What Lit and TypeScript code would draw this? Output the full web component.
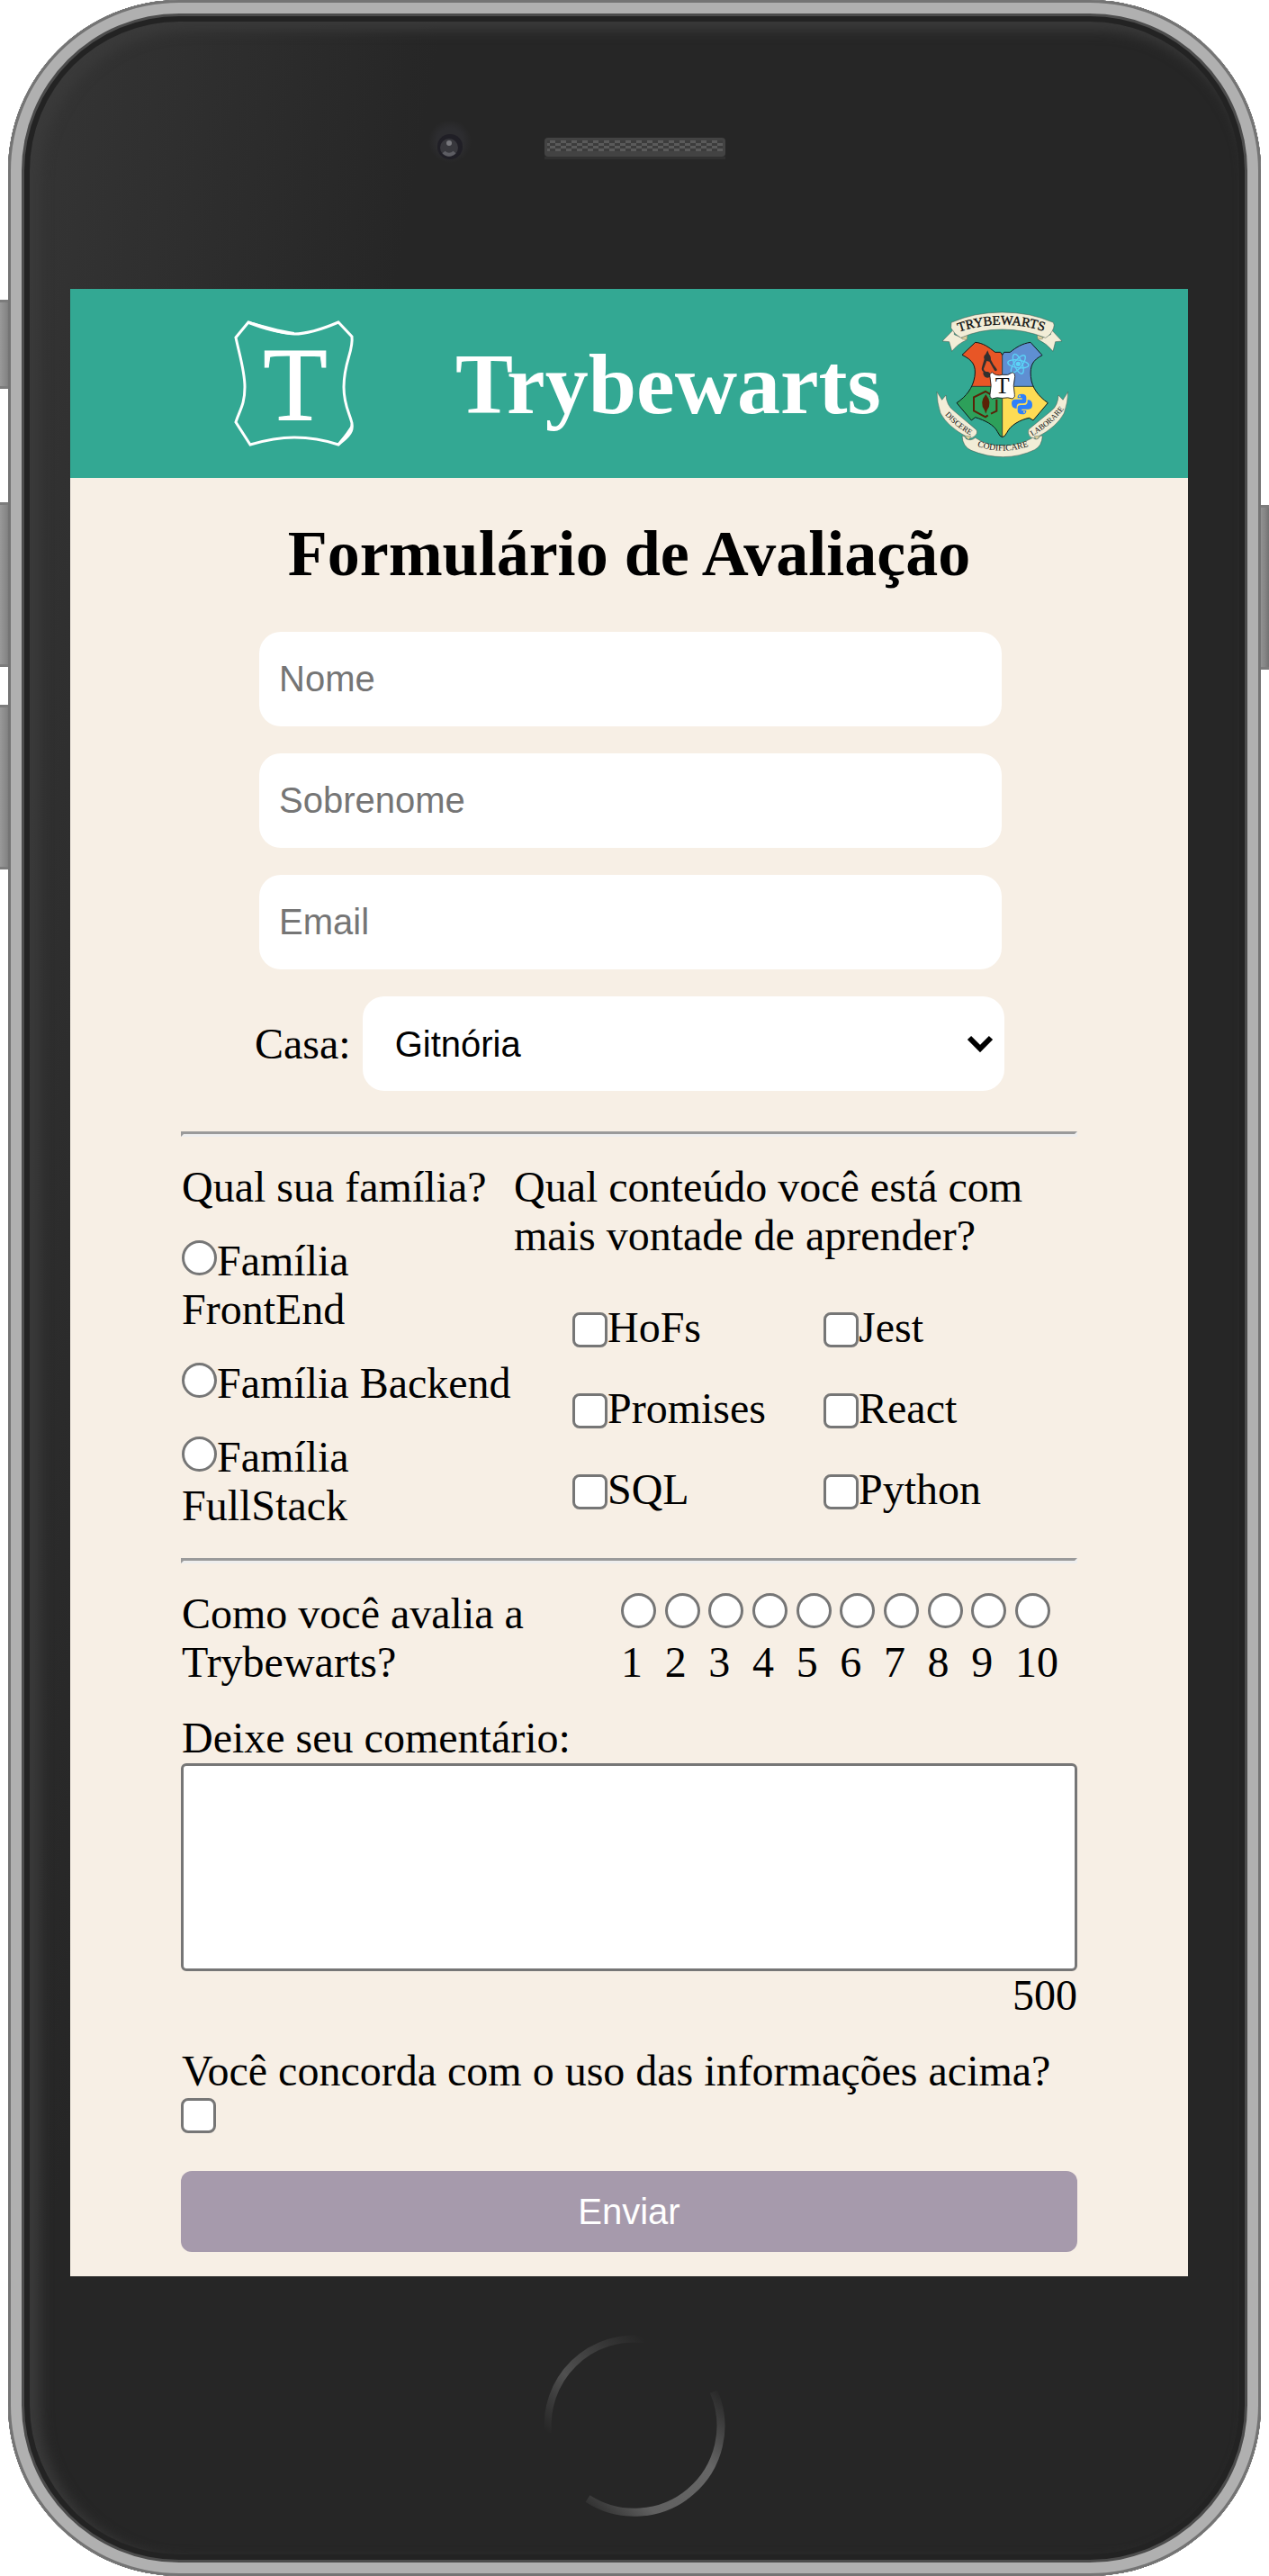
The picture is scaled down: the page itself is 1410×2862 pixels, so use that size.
import { LitElement, html, css, svg } from "lit";
import { customElement, property, state } from "lit/decorators.js";

@customElement("shield-logo")
export class ShieldLogo extends LitElement {
  static styles = css`
    :host { display: block; width: 134px; height: 142px; }
    svg { display: block; width: 100%; height: 100%; }
    .t { font: 117px "Liberation Serif", "Times New Roman", serif; fill: #fff; stroke: #fff; stroke-width: 1; }
  `;
  render() {
    return html`<svg viewBox="260 356 134 142" role="img" aria-label="Trybe">
      <path fill="none" stroke="#fff" stroke-width="3" stroke-linejoin="miter"
        d="M276 358 C292 363 312 371 327 371 C343 371 362 364 376 358 L391 374 C393 390 382 402 382 430 C382 450 388 458 391 470 C392 478 386 482 376 494 C358 488 345 486 327 486 C308 486 295 489 278 494 L262 469 C266 456 272 450 272 430 C272 412 266 394 262 375 Z"/>
      <path fill="#fff" d="M276 357 C292 361 312 367 327 369 V372 C312 372 292 366 276 360 Z M392 470 C395 480 388 486 377 495 L375 493 C382 485 387 477 392 470 Z"/>
      <text class="t" x="328" y="467" text-anchor="middle">T</text>
    </svg>`;
  }
}

@customElement("house-crest")
export class HouseCrest extends LitElement {
  static styles = css`
    :host { display: block; width: 150px; height: 163px; }
    svg { display: block; width: 100%; height: 100%; }
    text { font-family: "Liberation Serif", "Times New Roman", serif; fill: #0d0d0d; }
    .name { font-size: 44px; stroke: #0d0d0d; stroke-width: 1; }
    .motto { font-size: 26px; }
    .wide { font-size: 29px; }
    .mid { font-size: 78px; }
    .ribbon { fill: #f2edd7; stroke: #3d5048; stroke-width: 1.5; stroke-linejoin: round; }
    .fold { fill: #dccf9d; stroke: #3d5048; stroke-width: 1; }
  `;
  render() {
    const ring = (a: number) => svg`<ellipse cx="337" cy="220" rx="35" ry="13" transform="rotate(${a} 337 220)" fill="none" stroke="#5bd3f7" stroke-width="4"/>`;
    return html`<svg viewBox="60 45 450 489" role="img" aria-label="Trybewarts">
      <defs>
        <clipPath id="shield"><path d="M150 190 L194 148 C220 150 240 165 260 181 H278 L284 190 L290 181 H310 C330 165 350 152 378 148 L417 191 C385 208 376 225 379 262 C382 300 405 328 436 350 L387 408 L374 400 C345 405 310 425 300 448 Q292 464 284 464 Q276 464 268 446 C256 422 225 408 194 398 L181 408 L132 350 C164 328 186 300 192 262 C197 225 186 208 150 190 Z"/></clipPath>
        <path id="arcTop" d="M120 120 Q284 58 448 120"/>
        <path id="arcLeft" d="M84 378 Q124 430 190 464"/>
        <path id="arcMid" d="M180 486 Q286 532 392 486"/>
        <path id="arcRight" d="M380 463 Q452 422 492 366"/>
      </defs>
      <g clip-path="url(#shield)">
        <rect x="125" y="140" width="159" height="155" fill="#e85626"/>
        <rect x="284" y="140" width="160" height="155" fill="#5f8fd2"/>
        <rect x="125" y="295" width="159" height="175" fill="#2da05a"/>
        <rect x="284" y="295" width="160" height="175" fill="#fedc54"/>
        <path d="M125 295 H440 M284 180 V465" stroke="#1c3030" stroke-width="2.5"/>
      </g>
      <path d="M150 190 L194 148 C220 150 240 165 260 181 H278 L284 190 L290 181 H310 C330 165 350 152 378 148 L417 191 C385 208 376 225 379 262 C382 300 405 328 436 350 L387 408 L374 400 C345 405 310 425 300 448 Q292 464 284 464 Q276 464 268 446 C256 422 225 408 194 398 L181 408 L132 350 C164 328 186 300 192 262 C197 225 186 208 150 190 Z" fill="none" stroke="#101616" stroke-width="3"/>

      <path fill="#33302f" d="M235 175 L240 188 Q246 192 246 206 Q252 220 266 238 Q267 247 258 242 L241 212 L232 210 L222 236 Q223 246 236 246 Q246 250 245 262 Q236 270 226 263 Q218 255 221 246 Q212 240 217 228 L224 204 Q220 194 228 188 Z"/>
      ${ring(8)}${ring(68)}${ring(128)}
      <circle cx="337" cy="220" r="8" fill="#5bd3f7"/>
      <path fill="none" stroke="#5a2207" stroke-width="6" d="M236 391 L228 397 L189 376 V331 L228 312 L252 326 M265 338 V377 L246 386"/>
      <path fill="#5a2207" d="M229 321 Q252 350 233 374 L229 386 L225 374 Q206 350 229 321 Z"/>
      <g fill="#2e80fb">
        <path d="M335 330 Q335 320 349 320 Q364 320 364 332 V343 Q364 352 353 352 H342 Q332 352 332 364 V368 H327 Q315 366 315 351 Q315 338 328 338 H350 V334 H335 Z"/>
        <path d="M364 377 Q364 388 350 388 Q335 388 335 376 V367 Q335 357 346 357 H357 Q368 357 368 346 V340 H372 Q384 342 384 357 Q384 371 371 371 H349 V375 H364 Z"/>
      </g>
      <circle cx="342" cy="328" r="3" fill="#fedc54"/><circle cx="357" cy="380" r="3" fill="#fedc54"/>

      <path fill="#fff" stroke="#151515" stroke-width="2.5" d="M250 248 Q264 262 284 256 Q304 260 318 248 Q328 252 326 263 Q318 292 325 322 Q328 330 318 336 Q304 330 284 334 Q264 330 250 336 Q240 330 243 322 Q250 292 243 263 Q240 252 250 248 Z"/>
      <text class="mid" x="284" y="318" text-anchor="middle">T</text>

      <path class="ribbon" d="M124 103 L84 144 L107 146 L116 178 Q136 152 166 140 L124 122 Z"/>
      <path class="ribbon" d="M445 103 L483 144 L461 146 L453 178 Q432 152 402 138 L445 122 Z"/>
      <path class="fold" d="M148 131 L168 123 L166 140 L150 137 Z"/>
      <path class="fold" d="M420 131 L400 123 L402 138 L418 137 Z"/>
      <path class="ribbon" d="M114 82 Q190 48 284 48 Q378 48 454 82 Q459 90 455 100 Q448 122 428 133 Q360 105 284 105 Q206 105 146 133 Q124 122 113 100 Z"/>
      <text class="name" text-anchor="middle"><textPath href="#arcTop" startOffset="49%">TRYBEWARTS</textPath></text>

      <path class="ribbon" d="M66 313 L83 340 L96 324 Q98 358 122 376 L198 440 Q204 452 190 462 Q180 472 168 464 Q102 430 78 384 Q66 348 66 313 Z"/>
      <path class="ribbon" d="M503 313 L486 340 L471 324 Q470 358 448 376 L372 438 Q366 452 378 464 Q388 472 400 464 Q466 430 490 384 Q503 348 503 313 Z"/>
      <path class="fold" d="M158 460 L180 460 L172 474 Z M410 460 L390 460 L398 474 Z"/>
      <path class="ribbon" d="M150 460 Q152 496 180 508 Q232 530 286 530 Q342 530 392 506 Q416 494 418 460 Q410 456 406 466 Q398 476 386 466 Q340 492 284 492 Q230 492 194 466 Q180 478 164 470 Q158 458 150 460 Z"/>
      <text class="motto" text-anchor="middle"><textPath href="#arcLeft" startOffset="50%">DISCERE</textPath></text>
      <text class="wide" text-anchor="middle"><textPath href="#arcMid" startOffset="50%">CODIFICARE</textPath></text>
      <text class="motto" text-anchor="middle"><textPath href="#arcRight" startOffset="50%">LABORARE</textPath></text>
    </svg>`;
  }
}

@customElement("evaluation-form")
export class EvaluationForm extends LitElement {
  @property({ type: Number }) limit = 500;
  @state() private remaining = 500;

  static styles = css`
    :host { display: block; }
    * { box-sizing: border-box; }
    form {
      display: flex; flex-direction: column;
      padding: 45px 123px 27px;
      font: 48px/54px "Liberation Serif", "Times New Roman", serif;
      color: #000;
    }
    h2 { margin: 0; font-size: 72px; line-height: 78px; text-align: center; }
    p { margin: 0; }
    input, select, textarea, button { margin: 0; font: 40px/46px "Liberation Sans", Arial, sans-serif; }
    .fields { display: flex; flex-direction: column; gap: 30px; margin: 48px 84px 0 87px; }
    .text {
      width: 100%; height: 105px; padding: 0 22px;
      border: 0; border-radius: 24px; background: #fff;
    }
    .text::placeholder { color: #757575; opacity: 1; }
    .house { display: flex; align-items: center; gap: 13px; margin: 30px 81px 0 82px; }
    .picker { position: relative; flex: 1; }
    .picker select {
      display: block; width: 100%; height: 105px; padding: 0 36px;
      border: 0; border-radius: 24px; background: #fff; color: #000; appearance: none;
    }
    .chevron {
      position: absolute; right: 12px; top: 42px; width: 30px; height: 21px; pointer-events: none;
    }
    hr { width: 100%; height: 6px; margin: 0; border: 3px solid #9a9a9a; border-right-color: #eee; border-bottom-color: #eee; }
    .first { margin-top: 45px; }
    .questions { display: flex; margin-top: 29px; }
    fieldset { margin: 0; padding: 0; border: 0; min-width: 0; }
    legend { padding: 0; }
    .family { flex: 0 0 370px; padding-left: 1px; }
    .choices { display: flex; flex-direction: column; gap: 28px; margin-top: 28px; }
    .radio, .check {
      appearance: none; flex: none; width: 39px; height: 39px;
      border: 3px solid #767676; border-radius: 50%; background: #fff;
    }
    .check { border-radius: 8px; }
    .radio:checked { background: radial-gradient(#0075ff 50%, #fff 55%); border-color: #0075ff; }
    .check:checked { background: #0075ff; border-color: #0075ff; }
    .subjects { display: grid; grid-template-columns: 279px 1fr; gap: 36px 0; margin: 48px 0 0 65px; }
    .subjects label { display: flex; align-items: center; }
    .subjects .check { margin-top: 5px; }
    .second { margin-top: 31px; }
    .rating { display: flex; justify-content: space-between; margin-top: 29px; padding: 0 21px 0 1px; }
    .rating p { flex: 0 0 400px; }
    .scale { display: flex; flex: 0 0 486px; justify-content: space-between; }
    .scale label { display: flex; flex-direction: column; min-width: 39px; gap: 11px; padding-top: 4px; }
    .comment { margin-top: 30px; padding-left: 1px; }
    textarea {
      display: block; width: 100%; height: 231px; padding: 6px; resize: none;
      border: 3px solid #767676; border-radius: 6px; background: #fff; margin-top: 1px;
    }
    .counter { text-align: right; }
    .agree { display: flex; flex-direction: column; align-items: flex-start; gap: 3px; margin-top: 30px; }
    .agree span { padding-left: 1px; }
    .send {
      width: 100%; height: 90px; margin-top: 42px;
      border: 0; border-radius: 12px; background: #a69aac; color: #fff;
    }
  `;

  private count(e: Event) {
    this.remaining = this.limit - (e.target as HTMLTextAreaElement).value.length;
  }

  render() {
    const families = ["FrontEnd", "Backend", "FullStack"];
    const subjects = ["HoFs", "Jest", "Promises", "React", "SQL", "Python"];
    const grades = Array.from({ length: 10 }, (_, i) => i + 1);
    return html`<form @submit=${(e: Event) => e.preventDefault()}>
      <h2>Formulário de Avaliação</h2>
      <div class="fields">
        <input class="text" type="text" placeholder="Nome" aria-label="Nome">
        <input class="text" type="text" placeholder="Sobrenome" aria-label="Sobrenome">
        <input class="text" type="email" placeholder="Email" aria-label="Email">
      </div>
      <div class="house">
        <label for="house">Casa:</label>
        <div class="picker">
          <select id="house">
            <option>Gitnória</option><option>Reactpuff</option><option>Corvinode</option><option>Pytherina</option>
          </select>
          <svg class="chevron" viewBox="0 0 30 21" aria-hidden="true"><path d="M3 4 L15 16 L27 4" fill="none" stroke="#000" stroke-width="6"/></svg>
        </div>
      </div>
      <hr class="first">
      <div class="questions">
        <fieldset class="family">
          <legend>Qual sua família?</legend>
          <div class="choices">
            ${families.map((f) => html`<label><input class="radio" type="radio" name="family" value=${f}>Família ${f}</label>`)}
          </div>
        </fieldset>
        <fieldset>
          <legend>Qual conteúdo você está com mais vontade de aprender?</legend>
          <div class="subjects">
            ${subjects.map((s) => html`<label><input class="check" type="checkbox" value=${s}>${s}</label>`)}
          </div>
        </fieldset>
      </div>
      <hr class="second">
      <div class="rating" role="radiogroup" aria-labelledby="rate">
        <p id="rate">Como você avalia a Trybewarts?</p>
        <div class="scale">
          ${grades.map((g) => html`<label><input class="radio" type="radio" name="rate" value=${g}>${g}</label>`)}
        </div>
      </div>
      <label class="comment" for="comment">Deixe seu comentário:</label>
      <textarea id="comment" maxlength=${this.limit} @input=${this.count}></textarea>
      <div class="counter">${this.remaining}</div>
      <label class="agree"><span>Você concorda com o uso das informações acima?</span><input class="check" type="checkbox"></label>
      <button class="send" type="submit">Enviar</button>
    </form>`;
  }
}

@customElement("app-root")
export class AppRoot extends LitElement {
  static styles = css`
    :host { display: block; background: #fff; }
    * { box-sizing: border-box; }
    .device { position: relative; padding: 0 9px; }
    .key {
      position: absolute; width: 12px; background: linear-gradient(90deg, #999, #868686 60%, #727272);
      border: 3px solid #7c7c7c; border-width: 3px 0;
    }
    .mute { left: 0; top: 333px; height: 99px; }
    .up { left: 0; top: 558px; height: 183px; }
    .down { left: 0; top: 783px; height: 183px; }
    .power { right: 0; top: 561px; height: 183px; }
    .shell {
      position: relative; padding: 0 81px 0 69px; border-radius: 190px; overflow: hidden;
      background: linear-gradient(100deg, #363636 0, #262626 480px);
      box-shadow: inset 0 0 0 3px #747474, inset 0 0 0 15px #b0b0b0, inset 0 0 0 18px #4c4c4c,
        inset 0 0 0 24px #232323, inset 10px 8px 14px 26px #3a3a3a;
    }
    .top { position: relative; height: 321px; }
    .camera { position: absolute; left: 390px; top: 131px; width: 64px; height: 64px; }
    .speaker { position: absolute; left: 527px; top: 153px; width: 201px; height: 24px; }
    .screen { background: #f7efe5; }
    header {
      display: flex; align-items: center; justify-content: space-between; height: 210px;
      padding: 2px 131px 0 182px; background: #33a893;
    }
    shield-logo { margin-right: 52px; }
    h1 { margin: 0; font: bold 96px/108px "Liberation Serif", "Times New Roman", serif; color: #fff; }
    .bottom { display: flex; justify-content: center; height: 333px; padding: 60px 0 0 10px; }
    .home { width: 210px; height: 210px; }
  `;

  render() {
    return html`<div class="device">
      <div class="key mute"></div><div class="key up"></div><div class="key down"></div><div class="key power"></div>
      <div class="shell">
        <div class="top">
          <svg class="camera" viewBox="0 0 64 64" aria-hidden="true">
            <defs><radialGradient id="halo"><stop offset=".6" stop-color="#2d2d30"/><stop offset="1" stop-color="#2d2d30" stop-opacity="0"/></radialGradient></defs>
            <circle cx="32" cy="26" r="24" fill="url(#halo)"/>
            <circle cx="32" cy="32" r="14" fill="#201f26"/>
            <circle cx="31" cy="33" r="10" fill="#38383d"/>
            <path d="M25 38 A8 8 0 0 0 37 38" fill="none" stroke="#5d5d63" stroke-width="4"/>
            <circle cx="31" cy="28" r="3" fill="#77777c"/>
          </svg>
          <svg class="speaker" viewBox="0 0 201 24" aria-hidden="true">
            <defs><pattern id="mesh" width="12" height="6" patternUnits="userSpaceOnUse">
              <rect width="12" height="6" fill="#3c3c3c"/><rect width="6" height="3" fill="#5a5a5a"/><rect x="6" y="3" width="6" height="3" fill="#5a5a5a"/>
            </pattern></defs>
            <rect width="201" height="21" rx="4" fill="#434343"/>
            <rect x="3" y="3" width="195" height="12" fill="url(#mesh)"/>
            <rect x="0" y="21" width="201" height="3" fill="#303030"/>
          </svg>
        </div>
        <main class="screen">
          <header><shield-logo></shield-logo><h1>Trybewarts</h1><house-crest></house-crest></header>
          <evaluation-form></evaluation-form>
        </main>
        <div class="bottom">
          <svg class="home" viewBox="0 0 210 210" aria-hidden="true">
            <defs>
              <linearGradient id="g1" x1="0" y1="1" x2="1" y2="0"><stop offset="0" stop-color="#262626"/><stop offset=".4" stop-color="#505050"/><stop offset="1" stop-color="#262626"/></linearGradient>
              <linearGradient id="g2" x1="0" y1="1" x2="1" y2="0"><stop offset="0" stop-color="#2a2a2a"/><stop offset=".25" stop-color="#606060"/><stop offset=".65" stop-color="#666"/><stop offset="1" stop-color="#262626"/></linearGradient>
            </defs>
            <path d="M10 114 A96 96 0 0 1 116 10" fill="none" stroke="url(#g1)" stroke-width="8"/>
            <path d="M54 187 A96 96 0 0 0 194 68" fill="none" stroke="url(#g2)" stroke-width="9"/>
          </svg>
        </div>
      </div>
    </div>`;
  }
}
